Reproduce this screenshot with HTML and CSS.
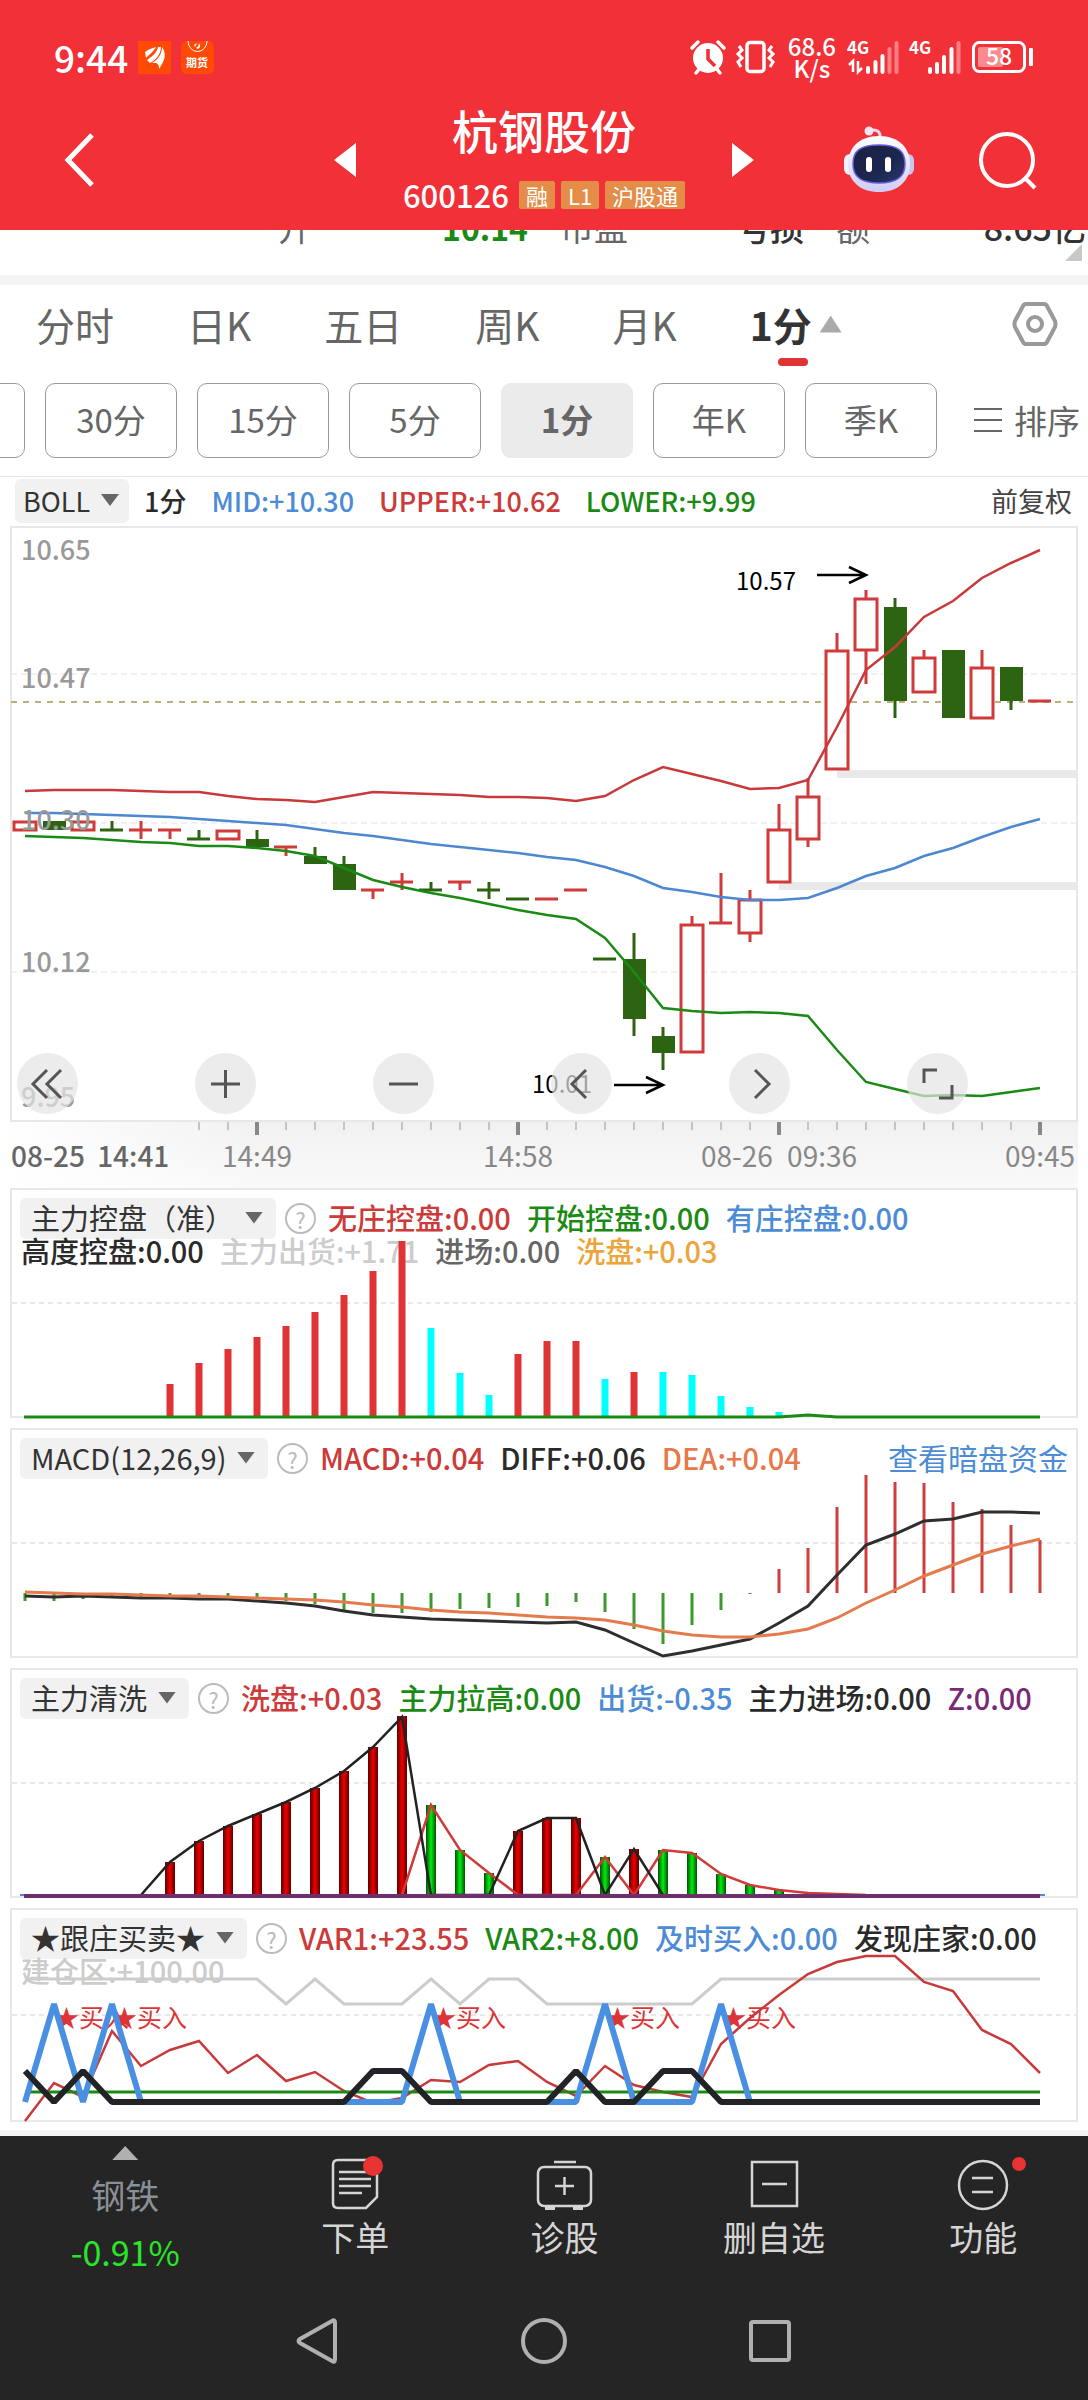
FILE: index.html
```html
<!DOCTYPE html>
<html lang="zh-CN">
<head>
<meta charset="utf-8">
<meta name="viewport" content="width=device-width, initial-scale=1">
<title>杭钢股份 600126</title>
<link rel="stylesheet" href="styles.css">
</head>
<body>
<header class="top">
  <div class="status">
    <span class="clock">9:44</span>
    <svg class="app-icon" viewBox="0 0 33 33" aria-hidden="true">
      <rect width="33" height="33" fill="#ff4a06"/>
      <path d="M7 11C11 8 15 7 18 6C16 10 11 14 8 17ZM9 19C15 15 19 11 20 6L23 6C23 13 18 19 12 22ZM14 22C21 18 24 12 24 6C29 13 27 19 21 28C21 24 20 23 18 22Z" fill="#fff"/>
    </svg>
    <svg class="app-icon" viewBox="0 0 33 33" aria-hidden="true">
      <rect width="33" height="33" rx="6" fill="#ff4a06"/>
      <path d="M7 0a9 10 0 0 0 19 0" fill="none" stroke="#fff" stroke-width="1"/>
      <path d="M13 4l3-2-2 4zM15 7c2-1 3-3 3-5c2 3 1 5-1 6z" fill="#fff"/>
      <text x="16" y="26" text-anchor="middle" font-size="11" font-weight="700" fill="#fff">期货</text>
    </svg>
    <span class="spacer"></span>
    <svg width="36" height="36" viewBox="0 0 36 36" aria-label="闹钟">
      <circle cx="18" cy="19" r="15" fill="#fff"/>
      <path d="M2 9l6-6M34 9l-6-6M6 34l4-5M30 34l-4-5" stroke="#fff" stroke-width="3.5" stroke-linecap="round"/>
      <path d="M18 10v10l7 7" fill="none" stroke="#f23037" stroke-width="3.5"/>
    </svg>
    <svg width="40" height="36" viewBox="0 0 40 36" aria-label="振动">
      <rect x="11" y="3.500" width="17" height="29" rx="3" fill="none" stroke="#fff" stroke-width="3.500"/>
      <path d="M3 7l3 4-4 4 4 4-4 4 3 5M36 7l-3 4 4 4-4 4 4 4-3 5" fill="none" stroke="#fff" stroke-width="3"/>
    </svg>
    <span class="speed">68.6<br>K/s</span>
    <svg width="52" height="36" viewBox="0 0 52 36" aria-label="4G 信号">
      <text x="-1" y="15" font-size="17" font-weight="700" fill="#fff">4G</text>
      <path d="M1 26l4-4v11M10 22v11l4-4" fill="none" stroke="#fff" stroke-width="2.500"/>
      <path d="M20 33v-4M27.500 33v-10M34.500 33v-16" stroke="#fff" stroke-width="4" stroke-linecap="round"/>
      <path d="M41.500 33v-23M48.500 33v-29" stroke="#fa8085" stroke-width="4" stroke-linecap="round"/>
    </svg>
    <svg width="52" height="36" viewBox="0 0 52 36" aria-label="4G 信号">
      <text x="-1" y="15" font-size="17" font-weight="700" fill="#fff">4G</text>
      <path d="M20 33v-3M27 33v-8M34 33v-15M41.500 33v-23" stroke="#fff" stroke-width="4" stroke-linecap="round"/>
      <path d="M48.500 33v-29" stroke="#fa8085" stroke-width="4" stroke-linecap="round"/>
    </svg>
    <svg width="62" height="36" viewBox="0 0 62 36" aria-label="电量 58%">
      <rect x="1.500" y="3.500" width="51" height="29" rx="6" fill="none" stroke="#fff" stroke-width="3"/>
      <rect x="6" y="8" width="25" height="20" rx="2" fill="#fa8a8e"/>
      <rect x="57" y="9" width="4" height="18" rx="1" fill="#fff"/>
      <text x="27" y="26" text-anchor="middle" font-size="23" font-weight="500" fill="#fff">58</text>
    </svg>
  </div>
  <div class="titlebar">
    <button class="icon-btn" aria-label="返回">
      <svg width="32" height="56" viewBox="0 0 32 56"><path d="M28 3L4 28L28 53" fill="none" stroke="#fff" stroke-width="5"/></svg>
    </button>
    <div class="stock">
      <button class="icon-btn" aria-label="上一只"><svg width="22" height="34" viewBox="0 0 22 34"><path d="M22 0v34L0 17z" fill="#fff"/></svg></button>
      <div class="stock-name">
        <h1>杭钢股份</h1>
        <div class="code-row"><span class="code">600126</span><span class="badge">融</span><span class="badge">L1</span><span class="badge">沪股通</span></div>
      </div>
      <button class="icon-btn" aria-label="下一只"><svg width="22" height="34" viewBox="0 0 22 34"><path d="M0 0v34l22-17z" fill="#fff"/></svg></button>
    </div>
    <div class="actions">
      <button class="icon-btn" aria-label="智能助手">
        <svg width="70" height="68" viewBox="0 0 70 68">
          <defs>
            <linearGradient id="shell" x1="0" y1="0" x2="0" y2="1"><stop offset="0" stop-color="#fff"/><stop offset="1" stop-color="#cfcdf5"/></linearGradient>
            <linearGradient id="face" x1="0" y1="0" x2="1" y2="1"><stop offset="0" stop-color="#1b2240"/><stop offset=".6" stop-color="#1c2750"/><stop offset="1" stop-color="#2a3a70"/></linearGradient>
          </defs>
          <path d="M25 5C33 2 37 6 36 13" fill="none" stroke="#eed8f0" stroke-width="3"/>
          <circle cx="25" cy="5" r="4.500" fill="#f7e4f1"/>
          <rect x="0" y="28" width="12" height="21" rx="6" fill="#f2f0fd"/>
          <rect x="58" y="28" width="12" height="21" rx="6" fill="#c9c5f4"/>
          <path d="M35 10C55 10 66 22 66 38C66 56 53 66 35 66C17 66 4 56 4 38C4 22 15 10 35 10Z" fill="url(#shell)"/>
          <path d="M35 19C54 19 61 25 61 38C61 51 53 57 35 57C17 57 9 51 9 38C9 25 16 19 35 19Z" fill="url(#face)" stroke="#6a5be0" stroke-width="1.500"/>
          <rect x="22" y="31" width="6" height="15" rx="3" fill="#fff"/>
          <rect x="41" y="31" width="6" height="15" rx="3" fill="#fff"/>
        </svg>
      </button>
      <button class="icon-btn" aria-label="搜索">
        <svg width="60" height="62" viewBox="0 0 60 62"><circle cx="29" cy="31" r="26" fill="none" stroke="#fff" stroke-width="4"/><path d="M46 48l11 11" stroke="#fff" stroke-width="4"/></svg>
      </button>
    </div>
  </div>
</header>

<main>
  <section class="quote" aria-label="行情">
    <span class="q-label">开</span><b class="q-down">10.14</b>
    <span class="q-label">市盈</span><span class="q-val q-pe">亏损</span>
    <span class="q-label">额</span><span class="q-val q-amt">8.65亿</span>
    <i class="corner"></i>
  </section>

  <nav class="tabs" aria-label="周期">
    <a href="#">分时</a><a href="#">日K</a><a href="#">五日</a><a href="#">周K</a><a href="#">月K</a>
    <a href="#" class="on">1分<i class="up"></i></a>
    <button class="icon-btn gear" aria-label="设置">
      <svg width="46" height="46" viewBox="0 0 46 46" fill="none" stroke="#999" stroke-width="4"><path d="M14 3h18q2 0 3 2l8 15q1 3 0 6l-8 15q-1 2-3 2H14q-2 0-3-2L3 26q-1-3 0-6L11 5q1-2 3-2z"/><circle cx="23" cy="23" r="7"/></svg>
    </button>
  </nav>

  <div class="periods">
    <div class="period-list">
      <button>60分</button><button>30分</button><button>15分</button><button>5分</button><button class="on">1分</button><button>年K</button><button>季K</button>
    </div>
    <button class="sort"><svg width="28" height="26" viewBox="0 0 28 26"><path d="M0 2h28M0 13h28M0 24h28" stroke="#666" stroke-width="2"/></svg>排序</button>
  </div>

  <div class="boll">
    <label class="chip"><select aria-label="主图指标"><option>BOLL</option></select><i class="down"></i></label>
    <span class="dark">1分</span>
    <span class="blue">MID:+10.30</span>
    <span class="red">UPPER:+10.62</span>
    <span class="green">LOWER:+9.99</span>
    <button class="adjust">前复权</button>
  </div>

  <section class="kline">
    <svg class="plot" viewBox="0 525 1088 663" role="img" aria-label="1分钟K线">
      <defs>
        <linearGradient id="axis-bg" x1="0" y1="0" x2="0" y2="1"><stop offset="0" stop-color="#f1f1f1"/><stop offset="1" stop-color="#fafafa"/></linearGradient>
        <linearGradient id="axis-fade" x1="0" y1="0" x2="1" y2="0"><stop offset="0" stop-color="#fff"/><stop offset="1" stop-color="#fff" stop-opacity="0"/></linearGradient>
      </defs>
      <rect x="0" y="1122" width="1078" height="66" fill="url(#axis-bg)"/>
      <rect x="0" y="1122" width="260" height="66" fill="url(#axis-fade)"/>
      <path d="M199 1122v8M228 1122v8M286 1122v8M315 1122v8M344 1122v8M373 1122v8M402 1122v8M431 1122v8M460 1122v8M489 1122v8M547 1122v8M576 1122v8M605 1122v8M634 1122v8M663 1122v8M692 1122v8M721 1122v8M750 1122v8M808 1122v8M837 1122v8M866 1122v8M895 1122v8M924 1122v8M953 1122v8M982 1122v8M1011 1122v8" stroke="#c4c4c4" stroke-width="2"/>
      <path d="M257 1122v13M518 1122v13M779 1122v13M1040 1122v13" stroke="#888" stroke-width="4"/>
      <g font-size="28" fill="#888">
        <text x="11" y="1167" fill="#666" font-weight="500">08-25<tspan dx="6"> 14:41</tspan></text>
        <text x="257" y="1167" text-anchor="middle">14:49</text>
        <text x="518" y="1167" text-anchor="middle">14:58</text>
        <text x="779" y="1167" text-anchor="middle">08-26<tspan dx="8"> 09:36</tspan></text>
        <text x="1075" y="1167" text-anchor="end">09:45</text>
      </g>
      <rect x="11" y="527" width="1066" height="594" fill="#fff" stroke="#e8e8e8" stroke-width="2"/>
      <path d="M11 674H1077M11 823H1077M11 972H1077" stroke="#e2e2e2" stroke-width="1" stroke-dasharray="6 4"/>
      <path d="M11 702H1073" stroke="#bdb07c" stroke-width="2" stroke-dasharray="6 6"/>
      <path d="M837 774H1078M779 886H1078" stroke="#e9e9e9" stroke-width="8"/>
      <!-- falling candles -->
      <g fill="#2d6412" stroke="none">
        <path d="M43 821h23v9h-23zM246 839h23v8h-23zM304 856h23v8h-23zM333 864h23v26h-23zM623 959h23v60h-23zM652 1036h23v17h-23zM884 607h23v94h-23zM942 650h23v68h-23zM1000 667h23v34h-23z"/>
      </g>
      <path d="M112 821v9M199 830v9M257 830v9M315 847v9M344 856v9M431 882v8M489 882v17M634 933v103M663 1027v43M895 598v120M1011 701v9" stroke="#2d6412" stroke-width="3"/>
      <path d="M100 830h23M187 839h23M419 890h23M477 890h23M506 899h23M593 959h23" stroke="#2d6412" stroke-width="3"/>
      <!-- rising candles -->
      <path d="M141 821v18M170 830v9M286 847v9M373 890v9M402 873v17M460 882v8M692 916v8M721 873v50M750 890v52M779 804v26M808 778v69M837 633v17M866 590v94M924 650v8M982 650v17" stroke="#d03a3a" stroke-width="3"/>
      <path d="M129 830h23M158 830h23M274 847h23M361 890h23M390 882h23M448 882h23M535 899h23M564 890h23M709 923h23M1028 701h23" stroke="#d03a3a" stroke-width="3"/>
      <path d="M14 822h22v8h-22zM72 822h22v8h-22zM217 831h22v8h-22zM681 925h22v127h-22zM739 900h22v33h-22zM768 830h22v52h-22zM797 797h22v42h-22zM826 651h22v118h-22zM855 599h22v51h-22zM913 658h22v34h-22zM971 668h22v50h-22z" fill="#fff" stroke="#d03a3a" stroke-width="3"/>
      <!-- bands -->
      <g fill="none" stroke-width="2.5">
        <polyline stroke="#c8393a" points="25,791 54,790 83,790 112,790 141,791 170,792 199,792 228,796 257,799 286,800 315,802 344,797 373,792 402,793 431,794 460,795 489,797 518,797 547,798 576,801 605,796 634,780 663,767 692,774 721,781 750,789 779,788 808,780 837,727 866,670 895,647 924,617 953,601 982,578 1011,563 1040,550"/>
        <polyline stroke="#4c87cf" points="25,813 54,813 83,814 112,815 141,816 170,817 199,819 228,821 257,823 286,825 315,829 344,833 373,836 402,840 431,844 460,847 489,850 518,853 547,857 576,860 605,867 634,876 663,888 692,892 721,897 750,900 779,900 808,898 837,888 866,876 895,868 924,856 953,848 982,837 1011,827 1040,819"/>
        <polyline stroke="#1a8a14" points="25,836 54,837 83,838 112,840 141,842 170,843 199,846 228,846 257,848 286,851 315,856 344,868 373,880 402,887 431,893 460,898 489,904 518,910 547,915 576,919 605,938 634,972 663,1008 692,1011 721,1013 750,1012 779,1013 808,1016 837,1050 866,1082 895,1089 924,1096 953,1095 982,1096 1011,1092 1040,1088"/>
      </g>
      <g font-size="27" font-weight="500" fill="#999">
        <text x="21" y="560">10.65</text>
        <text x="21" y="688">10.47</text>
        <text x="21" y="830">10.30</text>
        <text x="21" y="972">10.12</text>
        <text x="21" y="1107">9.95</text>
      </g>
      <g font-size="24" fill="#000">
        <text x="736" y="590">10.57</text>
        <text x="532" y="1093">10.01</text>
      </g>
      <path d="M817 575h49M849 567l17 8l-17 8M614 1085h49M646 1077l17 8l-17 8" fill="none" stroke="#000" stroke-width="2.500"/>
    </svg>
    <div class="tools">
      <button aria-label="快退"><svg viewBox="0 0 61 61"><path d="M30 17L16 31L30 45M44 17L30 31L44 45"/></svg></button>
      <button aria-label="放大"><svg viewBox="0 0 61 61"><path d="M16 31H45M30.500 17V45"/></svg></button>
      <button aria-label="缩小"><svg viewBox="0 0 61 61"><path d="M16 31H45"/></svg></button>
      <button aria-label="左移"><svg viewBox="0 0 61 61"><path d="M35 17L21 31L35 45"/></svg></button>
      <button aria-label="右移"><svg viewBox="0 0 61 61"><path d="M26 17L40 31L26 45"/></svg></button>
      <button aria-label="全屏"><svg viewBox="0 0 61 61"><path d="M30 17H17V30M32 45H45V32"/></svg></button>
    </div>
  </section>

  <div class="panels">
    <section class="panel">
      <div class="legend">
        <div class="row">
          <label class="chip"><select aria-label="副图一指标"><option>主力控盘（准）</option></select><i class="down"></i></label>
          <button class="help" aria-label="指标说明">?</button>
          <span class="items"><span class="red">无庄控盘:0.00</span><span class="green">开始控盘:0.00</span><span class="blue">有庄控盘:0.00</span></span>
        </div>
        <div class="row second"><span class="dark">高度控盘:0.00</span><span class="pale">主力出货:+1.71</span><span class="grey">进场:0.00</span><span class="amber">洗盘:+0.03</span></div>
      </div>
      <svg class="plot" viewBox="12 1190 1064 226" role="img" aria-label="主力控盘">
        <path d="M12 1303H1076" stroke="#e8e8e8" stroke-width="2" stroke-dasharray="5 4"/>
        <path d="M170 1416V1384M199 1416V1363M228 1416V1349M257 1416V1337M286 1416V1326M315 1416V1312M344 1416V1295M373 1416V1271M402 1416V1241M518 1416V1354M547 1416V1341M576 1416V1341M634 1416V1372" stroke="#e03434" stroke-width="7"/>
        <path d="M431 1416V1328M460 1416V1373M489 1416V1395M605 1416V1379M663 1416V1372M692 1416V1375M721 1416V1396M750 1416V1407M779 1416V1412" stroke="#0ff" stroke-width="7"/>
        <polyline points="24,1417 779,1417 808,1415 837,1417 1040,1417" fill="none" stroke="#1a8a14" stroke-width="3"/>
      </svg>
    </section>

    <section class="panel">
      <div class="legend">
        <div class="row">
          <label class="chip"><select aria-label="副图二指标"><option>MACD(12,26,9)</option></select><i class="down"></i></label>
          <button class="help" aria-label="指标说明">?</button>
          <span class="items"><span class="red">MACD:+0.04</span><span class="dark">DIFF:+0.06</span><span class="orange">DEA:+0.04</span></span>
          <a href="#" class="more">查看暗盘资金</a>
        </div>
      </div>
      <svg class="plot" viewBox="12 1430 1064 226" role="img" aria-label="MACD">
        <path d="M12 1543H1076" stroke="#e8e8e8" stroke-width="2" stroke-dasharray="5 4"/>
        <path d="M25 1593V1601M54 1593V1601M83 1593V1599M112 1593V1598M141 1593V1597M170 1593V1597M199 1593V1597M228 1593V1597M257 1593V1598M286 1593V1601M315 1593V1604M344 1593V1610M373 1593V1613M402 1593V1613M431 1593V1612M460 1593V1609M489 1593V1608M518 1593V1607M547 1593V1606M576 1593V1602M605 1593V1612M634 1593V1629M663 1593V1644M692 1593V1625M721 1593V1610M750 1593V1594" stroke="#3c982f" stroke-width="3"/>
        <path d="M779 1593V1569M808 1593V1548M837 1593V1507M866 1593V1475M895 1593V1482M924 1593V1483M953 1593V1502M982 1593V1509M1011 1593V1525M1040 1593V1540" stroke="#cd3f3f" stroke-width="3"/>
        <polyline fill="none" stroke="#2e2e2e" stroke-width="3" points="25,1596 54,1597 83,1596 112,1597 141,1598 170,1598 199,1599 228,1599 257,1601 286,1603 315,1606 344,1611 373,1615 402,1617 431,1619 460,1620 489,1621 518,1622 547,1623 576,1622 605,1630 634,1643 663,1656 692,1651 721,1645 750,1639 779,1623 808,1606 837,1575 866,1545 895,1534 924,1521 953,1519 982,1512 1011,1512 1040,1513"/>
        <polyline fill="none" stroke="#e57b4c" stroke-width="3" points="25,1592 54,1593 83,1594 112,1594 141,1595 170,1596 199,1596 228,1597 257,1598 286,1599 315,1600 344,1602 373,1605 402,1607 431,1610 460,1612 489,1613 518,1615 547,1617 576,1618 605,1620 634,1625 663,1631 692,1635 721,1637 750,1637 779,1634 808,1629 837,1618 866,1603 895,1590 924,1576 953,1565 982,1554 1011,1546 1040,1539"/>
      </svg>
    </section>

    <section class="panel">
      <div class="legend">
        <div class="row">
          <label class="chip"><select aria-label="副图三指标"><option>主力清洗</option></select><i class="down"></i></label>
          <button class="help" aria-label="指标说明">?</button>
          <span class="items"><span class="red">洗盘:+0.03</span><span class="green">主力拉高:0.00</span><span class="blue">出货:-0.35</span><span class="dark">主力进场:0.00</span><span class="purple">Z:0.00</span></span>
        </div>
      </div>
      <svg class="plot" viewBox="12 1670 1064 226" role="img" aria-label="主力清洗">
        <defs>
          <linearGradient id="bar-red"><stop offset="0" stop-color="#5c0000"/><stop offset=".5" stop-color="#f00000"/><stop offset="1" stop-color="#5c0000"/></linearGradient>
          <linearGradient id="bar-green"><stop offset="0" stop-color="#055005"/><stop offset=".5" stop-color="#00ee10"/><stop offset="1" stop-color="#055005"/></linearGradient>
        </defs>
        <path d="M12 1783H1076" stroke="#e8e8e8" stroke-width="2" stroke-dasharray="5 4"/>
        <g fill="url(#bar-red)">
          <rect x="165" y="1862" width="10" height="33"/><rect x="194" y="1841" width="10" height="54"/><rect x="223" y="1826" width="10" height="69"/><rect x="252" y="1814" width="10" height="81"/><rect x="281" y="1802" width="10" height="93"/><rect x="310" y="1788" width="10" height="107"/><rect x="339" y="1771" width="10" height="124"/><rect x="368" y="1747" width="10" height="148"/><rect x="397" y="1716" width="10" height="179"/><rect x="513" y="1831" width="10" height="64"/><rect x="542" y="1818" width="10" height="77"/><rect x="571" y="1818" width="10" height="77"/><rect x="629" y="1849" width="10" height="46"/>
        </g>
        <g fill="url(#bar-green)">
          <rect x="426" y="1805" width="10" height="90"/><rect x="455" y="1850" width="10" height="45"/><rect x="484" y="1873" width="10" height="22"/><rect x="600" y="1857" width="10" height="38"/><rect x="658" y="1850" width="10" height="45"/><rect x="687" y="1853" width="10" height="42"/><rect x="716" y="1874" width="10" height="21"/><rect x="745" y="1885" width="10" height="10"/><rect x="774" y="1890" width="10" height="5"/>
        </g>
        <polyline fill="none" stroke="#d03a3a" stroke-width="2.5" points="402,1895 431,1805 460,1850 489,1873 518,1895 576,1895 605,1857 634,1895 663,1850 692,1853 721,1874 750,1885 779,1890 808,1893 866,1895"/>
        <polyline fill="none" stroke="#222" stroke-width="2.5" points="141,1895 170,1862 199,1841 228,1826 257,1814 286,1802 315,1788 344,1771 373,1747 402,1717 431,1895 489,1895 518,1831 547,1818 576,1818 605,1895 634,1849 663,1895"/>
        <path d="M20 1895H25M1040 1895H1045" stroke="#4a90e2" stroke-width="2"/>
        <path d="M24 1896H1040" stroke="#6d306d" stroke-width="4"/>
      </svg>
    </section>

    <section class="panel">
      <div class="legend">
        <div class="row">
          <label class="chip"><select aria-label="副图四指标"><option>★跟庄买卖★</option></select><i class="down"></i></label>
          <button class="help" aria-label="指标说明">?</button>
          <span class="items"><span class="red">VAR1:+23.55</span><span class="green">VAR2:+8.00</span><span class="blue">及时买入:0.00</span><span class="dark">发现庄家:0.00</span></span>
        </div>
        <div class="row second"><span class="pale">建仓区:+100.00</span></div>
      </div>
      <svg class="plot" viewBox="12 1910 1064 210" role="img" aria-label="跟庄买卖">
        <path d="M12 2015H1076" stroke="#e8e8e8" stroke-width="2" stroke-dasharray="5 4"/>
        <polyline fill="none" stroke="#ccc" stroke-width="3" points="25,1979 257,1979 286,2004 315,1979 344,2004 402,2004 431,1979 460,2004 489,1979 518,1979 547,2004 692,2004 721,1979 1040,1979"/>
        <g font-size="25" fill="#dd3535">
          <text x="54" y="2027">★买入</text><text x="112" y="2027">★买入</text><text x="431" y="2027">★买入</text><text x="605" y="2027">★买入</text><text x="721" y="2027">★买入</text>
        </g>
        <polyline fill="none" stroke="#c8393a" stroke-width="2.5" points="25,2121 54,2083 83,2097 112,2031 141,2066 170,2050 199,2041 228,2073 257,2055 286,2081 315,2072 344,2091 373,2103 402,2098 431,2080 460,2082 489,2065 518,2061 547,2082 576,2096 605,2066 634,2085 663,2092 692,2097 721,2044 750,2018 779,1995 808,1974 837,1962 866,1956 895,1956 924,1982 953,1991 982,2030 1011,2044 1040,2073"/>
        <path d="M25 2092H1040" stroke="#1a8a14" stroke-width="3"/>
        <polyline fill="none" stroke="#4a90e2" stroke-width="6" stroke-linejoin="bevel" points="25,2102 54,2004 83,2102 112,2004 141,2102 402,2102 431,2004 460,2102 576,2102 605,2004 634,2102 692,2102 721,2004 750,2102 1040,2102"/>
        <polyline fill="none" stroke="#222326" stroke-width="6" stroke-linejoin="bevel" points="25,2071 54,2102 83,2071 112,2102 344,2102 373,2071 402,2071 431,2102 547,2102 576,2071 605,2102 634,2102 663,2071 692,2071 721,2102 1040,2102"/>
      </svg>
    </section>
  </div>
</main>

<footer class="bottom">
  <nav class="actions-bar" aria-label="操作">
    <a href="#" class="sector"><i class="up"></i><span class="sector-name">钢铁</span><span class="sector-chg">-0.91%</span></a>
    <a href="#">
      <svg width="60" height="56" viewBox="0 0 60 56"><path d="M42 4H13q-5 0-5 5V47q0 5 5 5H41L52 41V12" fill="none" stroke="#d5d5d5" stroke-width="2.500"/><path d="M14 16H42M14 23H46M14 30H46M14 37H37" stroke="#d5d5d5" stroke-width="2.500"/><circle cx="48" cy="10" r="10" fill="#e83333"/></svg>
      下单
    </a>
    <a href="#">
      <svg width="60" height="56" viewBox="0 0 60 56"><rect x="3" y="11" width="53" height="39" rx="6" fill="none" stroke="#d5d5d5" stroke-width="2.500"/><path d="M19 6H41M20 30H39M29.500 21V39" stroke="#d5d5d5" stroke-width="2.500"/><path d="M10 52H20M38 52H48" stroke="#d5d5d5" stroke-width="4"/></svg>
      诊股
    </a>
    <a href="#">
      <svg width="60" height="56" viewBox="0 0 60 56"><path d="M8 6H53V50H8ZM18 28H43" fill="none" stroke="#d5d5d5" stroke-width="2.500"/></svg>
      删自选
    </a>
    <a href="#">
      <svg width="90" height="56" viewBox="0 0 90 56"><circle cx="45" cy="29" r="24" fill="none" stroke="#d5d5d5" stroke-width="2.500"/><path d="M34 22H55M34 36H55" stroke="#d5d5d5" stroke-width="2.500"/><circle cx="81" cy="8" r="7" fill="#e83333"/></svg>
      功能
    </a>
  </nav>
  <div class="sysnav">
    <button class="icon-btn" aria-label="系统返回"><svg width="48" height="50" viewBox="0 0 48 50"><path d="M38 5Q41 3 41 7V43Q41 47 38 45L6 27Q3 25 6 23Z" fill="none" stroke="#b0b0b0" stroke-width="4"/></svg></button>
    <button class="icon-btn" aria-label="主屏幕"><svg width="48" height="50" viewBox="0 0 48 50"><circle cx="24" cy="25" r="21" fill="none" stroke="#b0b0b0" stroke-width="4"/></svg></button>
    <button class="icon-btn" aria-label="最近任务"><svg width="48" height="50" viewBox="0 0 48 50"><rect x="5" y="6" width="38" height="38" rx="2" fill="none" stroke="#b0b0b0" stroke-width="4"/></svg></button>
  </div>
</footer>
</body>
</html>
```
FILE: styles.css
```css
* { box-sizing: border-box; }

body {
  margin: 0;
  background: #fff;
  color: #333;
  font-family: "Noto Sans CJK SC", "Noto Sans", sans-serif;
  font-size: 29px;
}

button, select {
  margin: 0;
  padding: 0;
  border: 0;
  background: none;
  color: inherit;
  font: inherit;
}

a { color: inherit; text-decoration: none; }
svg { display: block; flex: none; overflow: visible; }
svg text { font-family: inherit; }

.icon-btn { display: flex; flex: none; }

.red { color: #cc3a39; }
.green { color: #1a8a14; }
.blue { color: #4c8bd6; }
.dark { color: #2a2a2a; }
.grey { color: #666; }
.pale { color: #ccc; }
.amber { color: #eca53a; }
.orange { color: #e8784a; }
.purple { color: #7a2a75; }

/* header */
.top { background: #f23037; color: #fff; }

.status {
  display: flex;
  align-items: center;
  gap: 10px;
  height: 90px;
  padding: 24px 54px 0;
}
.clock { font-size: 37px; font-weight: 500; line-height: 40px; }
.app-icon { width: 33px; height: 33px; }
.spacer { flex: 1; }
.speed { padding: 0 2px; font-size: 24px; font-weight: 500; line-height: 22px; text-align: center; }

.titlebar {
  display: grid;
  grid-template-columns: 1fr auto 1fr;
  align-items: center;
  height: 140px;
  padding: 0 50px 0 64px;
}
.stock { display: flex; align-items: center; gap: 47px; margin-left: -14px; }
.stock-name { display: flex; flex-direction: column; align-items: center; gap: 16px; padding-bottom: 6px; }
.stock-name h1 { margin: 0; font-size: 46px; font-weight: 500; line-height: 60px; }
.code-row { display: flex; align-items: center; gap: 6px; line-height: 40px; }
.code { margin-right: 4px; font-size: 31px; font-weight: 500; }
.badge {
  padding: 0 7px;
  border-radius: 2px;
  background: #e38d48;
  font-size: 22px;
  line-height: 28px;
}
.actions { display: flex; align-items: center; justify-content: flex-end; gap: 64px; }

/* quote strip, scrolled mostly under the header */
.quote {
  position: relative;
  display: flex;
  align-items: flex-end;
  height: 55px;
  padding: 0 2px 38px 278px;
  border-bottom: 10px solid #f4f4f4;
  overflow: hidden;
  font-size: 34px;
  line-height: 20px;
  white-space: nowrap;
}
.q-label { color: #666; }
.q-val { margin-right: 32px; font-weight: 500; }
.q-down { margin: 0 32px 0 130px; color: #1a8a14; font-size: 32px; }
.q-pe { margin-left: 108px; }
.q-amt { margin: 0 0 0 auto; }
.corner {
  position: absolute;
  right: 6px;
  bottom: 14px;
  width: 17px;
  height: 17px;
  background: #c8c8c8;
  clip-path: polygon(100% 0, 100% 100%, 0 100%);
}

/* period tabs */
.tabs {
  display: flex;
  align-items: center;
  gap: 73px;
  height: 84px;
  padding: 0 30px 6px 36px;
  color: #666;
  font-size: 39px;
  line-height: 60px;
  white-space: nowrap;
}
.tabs .on {
  position: relative;
  display: flex;
  align-items: center;
  gap: 8px;
  color: #333;
  font-weight: 700;
}
.tabs .on::after {
  content: "";
  position: absolute;
  left: 28px;
  bottom: -12px;
  width: 30px;
  height: 8px;
  border-radius: 4px;
  background: #e03333;
}
.up {
  width: 22px;
  height: 17px;
  background: #aaa;
  clip-path: polygon(50% 0, 100% 100%, 0 100%);
}
.gear { margin-left: auto; }

.periods {
  display: flex;
  align-items: center;
  justify-content: space-between;
  height: 108px;
  padding: 0 8px 4px 0;
  border-bottom: 1px solid #e4e4e4;
  color: #666;
  font-size: 33px;
  overflow: hidden;
}
.period-list { display: flex; gap: 20px; margin-left: -107px; }
.period-list button {
  width: 132px;
  height: 75px;
  padding-bottom: 4px;
  border: 1px solid #999;
  border-radius: 10px;
}
.period-list .on { border-color: #ebebeb; background: #ebebeb; font-weight: 700; }
.sort { display: flex; align-items: center; gap: 12px; padding-bottom: 2px; white-space: nowrap; }

.down {
  flex: none;
  width: 18px;
  height: 12px;
  background: #666;
  clip-path: polygon(0 0, 100% 0, 50% 100%);
}
.chip {
  display: flex;
  flex: none;
  align-items: center;
  gap: 10px;
  height: 41px;
  padding: 0 13px 2px 11px;
  border-radius: 6px;
  background: #f1f1f1;
  color: #333;
}
.chip select { appearance: none; line-height: 41px; }

.boll {
  display: flex;
  align-items: center;
  gap: 25px;
  height: 48px;
  padding: 0 16px 0 15px;
  font-size: 27px;
  white-space: nowrap;
}
.boll .chip { height: 44px; padding: 0 10px 2px 8px; margin-right: -10px; }
.boll > span, .boll > button { padding-bottom: 2px; }
.boll > span { font-weight: 500; }
.adjust { margin-left: auto; color: #444; }

/* charts */
.plot { width: 100%; height: auto; overflow: visible; }

.kline { position: relative; }
.tools {
  position: absolute;
  inset: auto 120px 74px 17px;
  display: flex;
  justify-content: space-between;
}
.tools button {
  width: 61px;
  height: 61px;
  border-radius: 50%;
  background: rgba(228, 228, 228, .7);
}
.tools svg { fill: none; stroke: #555; stroke-width: 3; }

.panels { display: grid; gap: 10px; padding: 0 10px 8px; border-bottom: 6px solid #f4f4f4; }
.panel { display: grid; border: 2px solid #e8e8e8; }
.panel > * { grid-area: 1 / 1; min-width: 0; }
.panel .plot { pointer-events: none; }
.legend { padding: 8px 8px 0; white-space: nowrap; }
.row { display: flex; align-items: center; height: 41px; }
.items { display: flex; gap: 16px; margin-left: 12px; padding-bottom: 4px; }
.items, .second { font-weight: 500; }
.second { gap: 16px; height: 26px; padding: 0 0 4px 1px; }
.help {
  flex: none;
  width: 31px;
  height: 31px;
  margin-left: 9px;
  border: 2px solid #bbb;
  border-radius: 50%;
  color: #bbb;
  font-size: 22px;
  line-height: 24px;
}
.more { margin-left: auto; padding-bottom: 4px; color: #4c8bd6; font-size: 30px; }

/* bottom bars */
.bottom { background: #252525; color: #d5d5d5; }
.actions-bar {
  display: grid;
  grid-template-columns: 250fr repeat(4, 209fr);
  height: 146px;
  font-size: 34px;
  line-height: 44px;
}
.actions-bar a {
  display: flex;
  flex-direction: column;
  align-items: center;
  gap: 3px;
  padding-top: 20px;
}
.actions-bar .sector { gap: 13px; padding-top: 10px; }
.sector .up { width: 26px; height: 14px; background: #b0b0b0; }
.sector-name { color: #8a9196; }
.sector-chg { color: #2be52b; }
.sysnav {
  display: flex;
  justify-content: center;
  gap: 178px;
  height: 118px;
  padding-top: 34px;
}
```
